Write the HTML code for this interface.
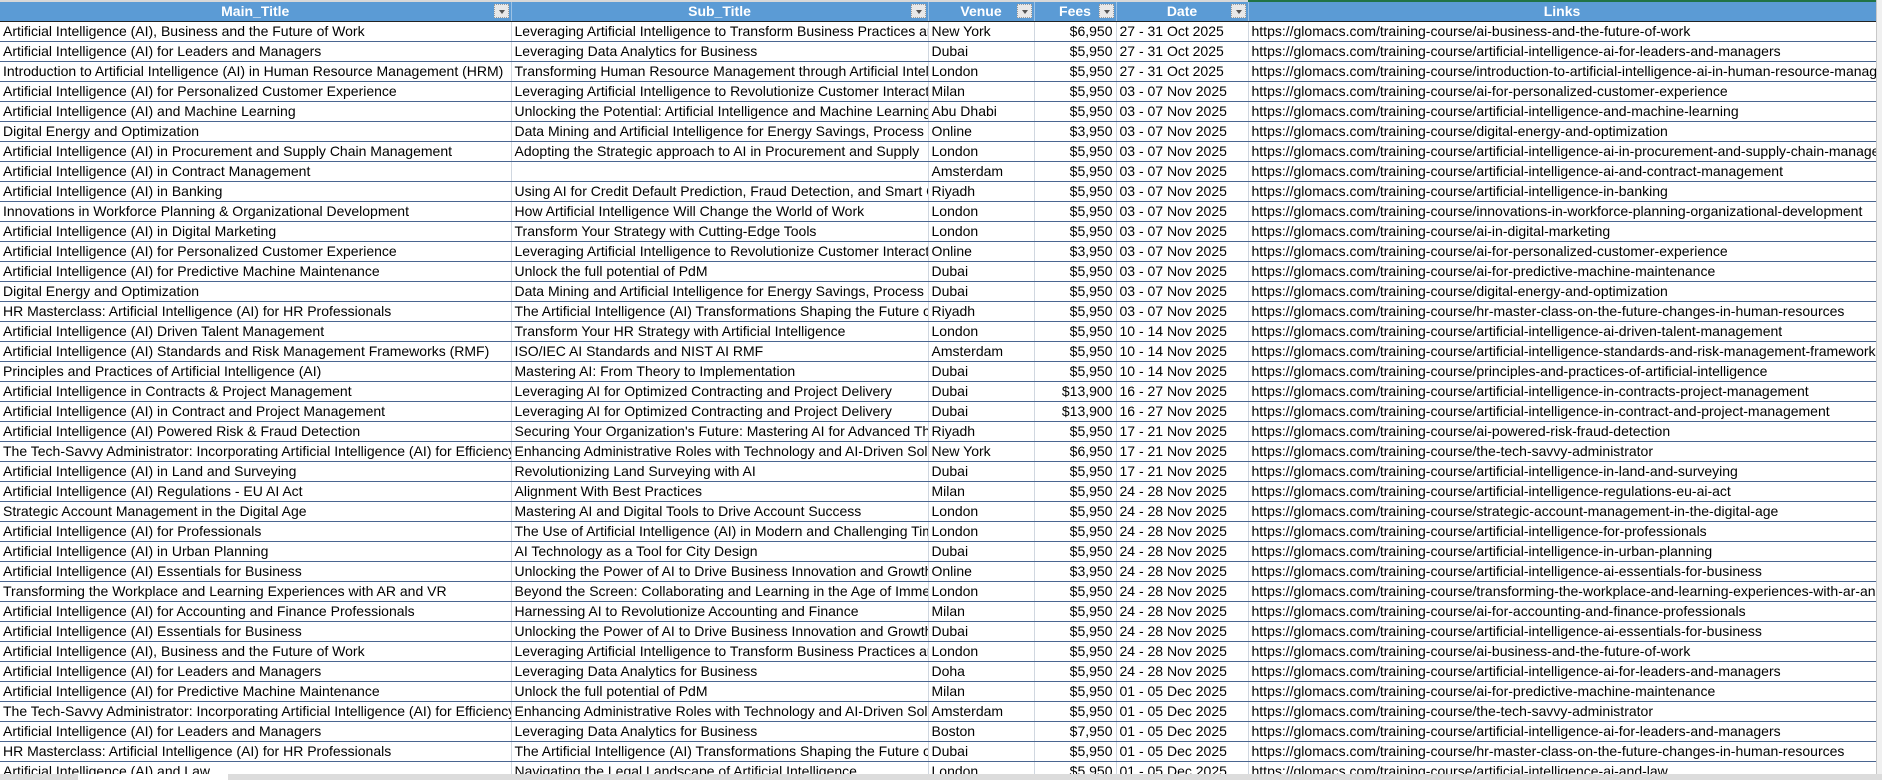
<!DOCTYPE html>
<html><head><meta charset="utf-8"><style>
html,body{margin:0;padding:0;width:1882px;height:780px;overflow:hidden;background:#fff}
body{position:relative;font-family:"Liberation Sans Narrow","Liberation Sans",sans-serif;font-size:14px;color:#000}
table{position:absolute;left:0;top:2px;border-collapse:collapse;table-layout:fixed;width:1876px}
td,th{height:19px;padding:0 3px;white-space:nowrap;overflow:hidden;border-right:1px solid #d0d7e0;border-bottom:1px solid #4a6590;line-height:19px;box-sizing:border-box}
th{background:#5b9bd5;color:#fff;font-weight:bold;text-align:center;position:relative;border-bottom:1px solid #222;border-right:1px solid #9cc2e5}
th span.b{position:absolute;right:2px;top:2px;width:15px;height:14px;background:#e8e8e8;border:1px dotted #999;box-sizing:border-box}
th span.b:after{content:"";position:absolute;left:4px;top:5px;border-left:3px solid transparent;border-right:3px solid transparent;border-top:4px solid #555}
td.f{text-align:right}
tr td{height:20px}
.top{position:absolute;left:0;top:0;width:1876px;height:2px;background:#d8d8d8}
.tg{position:absolute;left:1248px;top:0;width:628px;height:2px;background:#217346}
.bot{position:absolute;left:0;top:774px;width:1882px;height:6px;background:#dcdcdc}
.tab{position:absolute;left:78px;top:774px;width:150px;height:6px;background:#fff}
.rs{position:absolute;left:1876px;top:0;width:6px;height:780px;background:#f0f0f0;border-left:1px solid #c8c8c8}
</style></head><body>
<div class="top"></div><div class="tg"></div>
<table>
<colgroup><col style="width:511px"><col style="width:417px"><col style="width:106px"><col style="width:82px"><col style="width:132px"><col style="width:628px"></colgroup>
<tr><th>Main_Title<span class="b"></span></th><th>Sub_Title<span class="b"></span></th><th>Venue<span class="b"></span></th><th>Fees<span class="b"></span></th><th>Date<span class="b"></span></th><th>Links</th></tr>
<tr><td>Artificial Intelligence (AI), Business and the Future of Work</td><td>Leveraging Artificial Intelligence to Transform Business Practices and</td><td>New York</td><td class="f">$6,950</td><td>27 - 31 Oct 2025</td><td>https://glomacs.com/training-course/ai-business-and-the-future-of-work</td></tr>
<tr><td>Artificial Intelligence (AI) for Leaders and Managers</td><td>Leveraging Data Analytics for Business</td><td>Dubai</td><td class="f">$5,950</td><td>27 - 31 Oct 2025</td><td>https://glomacs.com/training-course/artificial-intelligence-ai-for-leaders-and-managers</td></tr>
<tr><td>Introduction to Artificial Intelligence (AI) in Human Resource Management (HRM)</td><td>Transforming Human Resource Management through Artificial Intelligence</td><td>London</td><td class="f">$5,950</td><td>27 - 31 Oct 2025</td><td>https://glomacs.com/training-course/introduction-to-artificial-intelligence-ai-in-human-resource-management</td></tr>
<tr><td>Artificial Intelligence (AI) for Personalized Customer Experience</td><td>Leveraging Artificial Intelligence to Revolutionize Customer Interactions</td><td>Milan</td><td class="f">$5,950</td><td>03 - 07 Nov 2025</td><td>https://glomacs.com/training-course/ai-for-personalized-customer-experience</td></tr>
<tr><td>Artificial Intelligence (AI) and Machine Learning</td><td>Unlocking the Potential: Artificial Intelligence and Machine Learning</td><td>Abu Dhabi</td><td class="f">$5,950</td><td>03 - 07 Nov 2025</td><td>https://glomacs.com/training-course/artificial-intelligence-and-machine-learning</td></tr>
<tr><td>Digital Energy and Optimization</td><td>Data Mining and Artificial Intelligence for Energy Savings, Process Optimization</td><td>Online</td><td class="f">$3,950</td><td>03 - 07 Nov 2025</td><td>https://glomacs.com/training-course/digital-energy-and-optimization</td></tr>
<tr><td>Artificial Intelligence (AI) in Procurement and Supply Chain Management</td><td>Adopting the Strategic approach to AI in Procurement and Supply</td><td>London</td><td class="f">$5,950</td><td>03 - 07 Nov 2025</td><td>https://glomacs.com/training-course/artificial-intelligence-ai-in-procurement-and-supply-chain-management</td></tr>
<tr><td>Artificial Intelligence (AI) in Contract Management</td><td></td><td>Amsterdam</td><td class="f">$5,950</td><td>03 - 07 Nov 2025</td><td>https://glomacs.com/training-course/artificial-intelligence-ai-and-contract-management</td></tr>
<tr><td>Artificial Intelligence (AI) in Banking</td><td>Using AI for Credit Default Prediction, Fraud Detection, and Smart Credit</td><td>Riyadh</td><td class="f">$5,950</td><td>03 - 07 Nov 2025</td><td>https://glomacs.com/training-course/artificial-intelligence-in-banking</td></tr>
<tr><td>Innovations in Workforce Planning &amp; Organizational Development</td><td>How Artificial Intelligence Will Change the World of Work</td><td>London</td><td class="f">$5,950</td><td>03 - 07 Nov 2025</td><td>https://glomacs.com/training-course/innovations-in-workforce-planning-organizational-development</td></tr>
<tr><td>Artificial Intelligence (AI) in Digital Marketing</td><td>Transform Your Strategy with Cutting-Edge Tools</td><td>London</td><td class="f">$5,950</td><td>03 - 07 Nov 2025</td><td>https://glomacs.com/training-course/ai-in-digital-marketing</td></tr>
<tr><td>Artificial Intelligence (AI) for Personalized Customer Experience</td><td>Leveraging Artificial Intelligence to Revolutionize Customer Interactions</td><td>Online</td><td class="f">$3,950</td><td>03 - 07 Nov 2025</td><td>https://glomacs.com/training-course/ai-for-personalized-customer-experience</td></tr>
<tr><td>Artificial Intelligence (AI) for Predictive Machine Maintenance</td><td>Unlock the full potential of PdM</td><td>Dubai</td><td class="f">$5,950</td><td>03 - 07 Nov 2025</td><td>https://glomacs.com/training-course/ai-for-predictive-machine-maintenance</td></tr>
<tr><td>Digital Energy and Optimization</td><td>Data Mining and Artificial Intelligence for Energy Savings, Process Optimization</td><td>Dubai</td><td class="f">$5,950</td><td>03 - 07 Nov 2025</td><td>https://glomacs.com/training-course/digital-energy-and-optimization</td></tr>
<tr><td>HR Masterclass: Artificial Intelligence (AI) for HR Professionals</td><td>The Artificial Intelligence (AI) Transformations Shaping the Future of HR</td><td>Riyadh</td><td class="f">$5,950</td><td>03 - 07 Nov 2025</td><td>https://glomacs.com/training-course/hr-master-class-on-the-future-changes-in-human-resources</td></tr>
<tr><td>Artificial Intelligence (AI) Driven Talent Management</td><td>Transform Your HR Strategy with Artificial Intelligence</td><td>London</td><td class="f">$5,950</td><td>10 - 14 Nov 2025</td><td>https://glomacs.com/training-course/artificial-intelligence-ai-driven-talent-management</td></tr>
<tr><td>Artificial Intelligence (AI) Standards and Risk Management Frameworks (RMF)</td><td>ISO/IEC AI Standards and NIST AI RMF</td><td>Amsterdam</td><td class="f">$5,950</td><td>10 - 14 Nov 2025</td><td>https://glomacs.com/training-course/artificial-intelligence-standards-and-risk-management-frameworks</td></tr>
<tr><td>Principles and Practices of Artificial Intelligence (AI)</td><td>Mastering AI: From Theory to Implementation</td><td>Dubai</td><td class="f">$5,950</td><td>10 - 14 Nov 2025</td><td>https://glomacs.com/training-course/principles-and-practices-of-artificial-intelligence</td></tr>
<tr><td>Artificial Intelligence in Contracts &amp; Project Management</td><td>Leveraging AI for Optimized Contracting and Project Delivery</td><td>Dubai</td><td class="f">$13,900</td><td>16 - 27 Nov 2025</td><td>https://glomacs.com/training-course/artificial-intelligence-in-contracts-project-management</td></tr>
<tr><td>Artificial Intelligence (AI) in Contract and Project Management</td><td>Leveraging AI for Optimized Contracting and Project Delivery</td><td>Dubai</td><td class="f">$13,900</td><td>16 - 27 Nov 2025</td><td>https://glomacs.com/training-course/artificial-intelligence-in-contract-and-project-management</td></tr>
<tr><td>Artificial Intelligence (AI) Powered Risk &amp; Fraud Detection</td><td>Securing Your Organization's Future: Mastering AI for Advanced Threat</td><td>Riyadh</td><td class="f">$5,950</td><td>17 - 21 Nov 2025</td><td>https://glomacs.com/training-course/ai-powered-risk-fraud-detection</td></tr>
<tr><td>The Tech-Savvy Administrator: Incorporating Artificial Intelligence (AI) for Efficiency</td><td>Enhancing Administrative Roles with Technology and AI-Driven Solutions</td><td>New York</td><td class="f">$6,950</td><td>17 - 21 Nov 2025</td><td>https://glomacs.com/training-course/the-tech-savvy-administrator</td></tr>
<tr><td>Artificial Intelligence (AI) in Land and Surveying</td><td>Revolutionizing Land Surveying with AI</td><td>Dubai</td><td class="f">$5,950</td><td>17 - 21 Nov 2025</td><td>https://glomacs.com/training-course/artificial-intelligence-in-land-and-surveying</td></tr>
<tr><td>Artificial Intelligence (AI) Regulations - EU AI Act</td><td>Alignment With Best Practices</td><td>Milan</td><td class="f">$5,950</td><td>24 - 28 Nov 2025</td><td>https://glomacs.com/training-course/artificial-intelligence-regulations-eu-ai-act</td></tr>
<tr><td>Strategic Account Management in the Digital Age</td><td>Mastering AI and Digital Tools to Drive Account Success</td><td>London</td><td class="f">$5,950</td><td>24 - 28 Nov 2025</td><td>https://glomacs.com/training-course/strategic-account-management-in-the-digital-age</td></tr>
<tr><td>Artificial Intelligence (AI) for Professionals</td><td>The Use of Artificial Intelligence (AI) in Modern and Challenging Times</td><td>London</td><td class="f">$5,950</td><td>24 - 28 Nov 2025</td><td>https://glomacs.com/training-course/artificial-intelligence-for-professionals</td></tr>
<tr><td>Artificial Intelligence (AI) in Urban Planning</td><td>AI Technology as a Tool for City Design</td><td>Dubai</td><td class="f">$5,950</td><td>24 - 28 Nov 2025</td><td>https://glomacs.com/training-course/artificial-intelligence-in-urban-planning</td></tr>
<tr><td>Artificial Intelligence (AI) Essentials for Business</td><td>Unlocking the Power of AI to Drive Business Innovation and Growth</td><td>Online</td><td class="f">$3,950</td><td>24 - 28 Nov 2025</td><td>https://glomacs.com/training-course/artificial-intelligence-ai-essentials-for-business</td></tr>
<tr><td>Transforming the Workplace and Learning Experiences with AR and VR</td><td>Beyond the Screen: Collaborating and Learning in the Age of Immersive</td><td>London</td><td class="f">$5,950</td><td>24 - 28 Nov 2025</td><td>https://glomacs.com/training-course/transforming-the-workplace-and-learning-experiences-with-ar-and-vr</td></tr>
<tr><td>Artificial Intelligence (AI) for Accounting and Finance Professionals</td><td>Harnessing AI to Revolutionize Accounting and Finance</td><td>Milan</td><td class="f">$5,950</td><td>24 - 28 Nov 2025</td><td>https://glomacs.com/training-course/ai-for-accounting-and-finance-professionals</td></tr>
<tr><td>Artificial Intelligence (AI) Essentials for Business</td><td>Unlocking the Power of AI to Drive Business Innovation and Growth</td><td>Dubai</td><td class="f">$5,950</td><td>24 - 28 Nov 2025</td><td>https://glomacs.com/training-course/artificial-intelligence-ai-essentials-for-business</td></tr>
<tr><td>Artificial Intelligence (AI), Business and the Future of Work</td><td>Leveraging Artificial Intelligence to Transform Business Practices and</td><td>London</td><td class="f">$5,950</td><td>24 - 28 Nov 2025</td><td>https://glomacs.com/training-course/ai-business-and-the-future-of-work</td></tr>
<tr><td>Artificial Intelligence (AI) for Leaders and Managers</td><td>Leveraging Data Analytics for Business</td><td>Doha</td><td class="f">$5,950</td><td>24 - 28 Nov 2025</td><td>https://glomacs.com/training-course/artificial-intelligence-ai-for-leaders-and-managers</td></tr>
<tr><td>Artificial Intelligence (AI) for Predictive Machine Maintenance</td><td>Unlock the full potential of PdM</td><td>Milan</td><td class="f">$5,950</td><td>01 - 05 Dec 2025</td><td>https://glomacs.com/training-course/ai-for-predictive-machine-maintenance</td></tr>
<tr><td>The Tech-Savvy Administrator: Incorporating Artificial Intelligence (AI) for Efficiency</td><td>Enhancing Administrative Roles with Technology and AI-Driven Solutions</td><td>Amsterdam</td><td class="f">$5,950</td><td>01 - 05 Dec 2025</td><td>https://glomacs.com/training-course/the-tech-savvy-administrator</td></tr>
<tr><td>Artificial Intelligence (AI) for Leaders and Managers</td><td>Leveraging Data Analytics for Business</td><td>Boston</td><td class="f">$7,950</td><td>01 - 05 Dec 2025</td><td>https://glomacs.com/training-course/artificial-intelligence-ai-for-leaders-and-managers</td></tr>
<tr><td>HR Masterclass: Artificial Intelligence (AI) for HR Professionals</td><td>The Artificial Intelligence (AI) Transformations Shaping the Future of HR</td><td>Dubai</td><td class="f">$5,950</td><td>01 - 05 Dec 2025</td><td>https://glomacs.com/training-course/hr-master-class-on-the-future-changes-in-human-resources</td></tr>
<tr><td>Artificial Intelligence (AI) and Law</td><td>Navigating the Legal Landscape of Artificial Intelligence</td><td>London</td><td class="f">$5,950</td><td>01 - 05 Dec 2025</td><td>https://glomacs.com/training-course/artificial-intelligence-ai-and-law</td></tr>
</table>
<div class="rs"></div>
<div class="bot"></div><div class="tab"></div>
</body></html>
